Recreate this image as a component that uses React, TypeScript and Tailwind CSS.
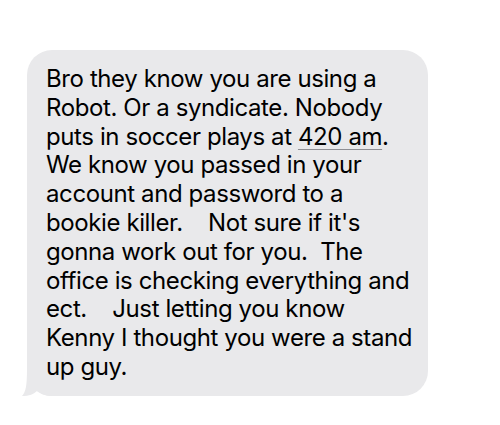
import React from "react";

const lines: React.ReactNode[] = [
  "Bro they know you are using a",
  "Robot. Or a syndicate. Nobody",
  <>
    puts in soccer plays at{" "}
    <span className="underline decoration-[#8e8e93] decoration-1 underline-offset-[4px]">420 am</span>.
  </>,
  "We know you passed in your",
  "account and password to a",
  "bookie killer.    Not sure if it's",
  "gonna work out for you.  The",
  "office is checking everything and",
  "ect.    Just letting you know",
  "Kenny I thought you were a stand",
  "up guy.",
];

export default function App() {
  return (
    <div className="w-[500px] h-[425px] bg-white pt-[50px] pl-[27px]">
      <div className="relative w-[401px] h-[346px]">
        <svg
          className="absolute left-[-8px] bottom-0"
          width="40"
          height="30"
          viewBox="0 0 40 30"
        >
          <path
            d="M8 0 L8 2 C8 19 7 26 3 30 C10 30 15 28 18 25 C22 28 26 30 34 30 L34 0 Z"
            fill="#e9e9eb"
          />
        </svg>
        <div
          className="relative w-full h-full rounded-[25px] bg-[#e9e9eb] pl-[19px] pt-[15px] text-[24px] leading-[28.8px] tracking-[-0.4px] text-black whitespace-pre"
          style={{ fontFamily: "Inter, 'Noto Sans', sans-serif" }}
        >
          {lines.map((l, i) => (
            <div key={i}>{l}</div>
          ))}
        </div>
      </div>
    </div>
  );
}
